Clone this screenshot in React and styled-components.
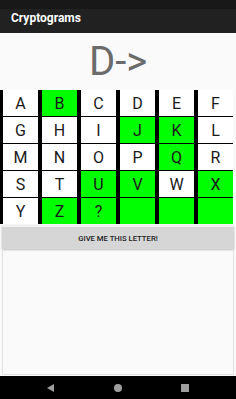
import React from "react";
import styled, { createGlobalStyle } from "styled-components";

const CELLS = [
  ["A", false], ["B", true], ["C", false], ["D", false], ["E", false], ["F", false],
  ["G", false], ["H", false], ["I", false], ["J", true], ["K", true], ["L", false],
  ["M", false], ["N", false], ["O", false], ["P", false], ["Q", true], ["R", false],
  ["S", false], ["T", false], ["U", true], ["V", true], ["W", false], ["X", true],
  ["Y", false], ["Z", true], ["?", true], ["", true], ["", true], ["", true],
];

export default function App() {
  return (
    <>
      <GlobalStyle />
      <Screen>
        <Header>
          <StatusBar />
          <Toolbar>
            <Title>Cryptograms</Title>
          </Toolbar>
        </Header>

        <Main>
          <Prompt>D-&gt;</Prompt>
          <Grid>
            {CELLS.map(([letter, solved], i) => (
              <Cell key={i} $solved={solved}>
                {letter}
              </Cell>
            ))}
          </Grid>
          <HintButton>GIVE ME THIS LETTER!</HintButton>
          <Filler />
        </Main>

        <NavBar>
          <svg width="10" height="10" viewBox="0 0 10 10">
            <polygon points="8,1 8,9 1,5" fill="#9e9e9e" />
          </svg>
          <svg width="10" height="10" viewBox="0 0 10 10">
            <circle cx="5" cy="5" r="4" fill="#9e9e9e" />
          </svg>
          <svg width="10" height="10" viewBox="0 0 10 10">
            <rect x="1" y="1" width="8" height="8" fill="#9e9e9e" />
          </svg>
        </NavBar>
      </Screen>
    </>
  );
}

/* ===== styles ===== */
const GlobalStyle = createGlobalStyle`
  html, body { margin: 0; padding: 0; background: #000; }
  body { font-family: Roboto, "Noto Sans", sans-serif; }
`;

const Screen = styled.div`
  width: 236px;
  height: 399px;
  display: flex;
  flex-direction: column;
  overflow: hidden;
  background: #fafafa;
`;

const Header = styled.header`
  height: 33px;
  display: flex;
  flex-direction: column;
  background: #212121;
`;

const StatusBar = styled.div`
  height: 9px;
  background: #181818;
`;

const Toolbar = styled.div`
  flex: 1;
  padding: 3px 0 0 11px;
`;

const Title = styled.h1`
  margin: 0;
  color: #fff;
  font-size: 12px;
  line-height: 12px;
  font-weight: 700;
`;

const Main = styled.main`
  flex: 1;
  display: flex;
  flex-direction: column;
  background: #fafafa;
`;

const Prompt = styled.div`
  padding: 9px 0 8px;
  text-align: center;
  font-size: 40px;
  line-height: 40px;
  color: #6b6b6b;
`;

const Grid = styled.div`
  width: 233px;
  box-sizing: border-box;
  padding-left: 3px;
  display: grid;
  grid-template-columns: repeat(6, 35px);
  grid-auto-rows: 26px;
  column-gap: 4px;
  row-gap: 1px;
  background: #000;
`;

const Cell = styled.div`
  display: flex;
  align-items: center;
  justify-content: center;
  background: ${(p) => (p.$solved ? "#00ff00" : "#fff")};
  color: #1a1a1a;
  font-size: 16px;
`;

const HintButton = styled.button`
  margin: 1px 2px 0;
  height: 24px;
  border: 0;
  border-top: 2px solid #f0f0f0;
  background: #d6d6d6;
  box-shadow: 0 1px 2px rgba(0, 0, 0, 0.25);
  color: #222;
  font-family: Roboto, sans-serif;
  font-size: 7.7px;
  font-weight: 500;
  padding: 0;
`;

const Filler = styled.div`
  flex: 1;
  margin: 0 2px 1px;
  border: 1px solid #e2e2e2;
  border-top: 0;
`;

const NavBar = styled.nav`
  height: 23px;
  background: #000;
  display: flex;
  align-items: center;
  justify-content: space-between;
  padding: 0 46px 0 46px;
`;
